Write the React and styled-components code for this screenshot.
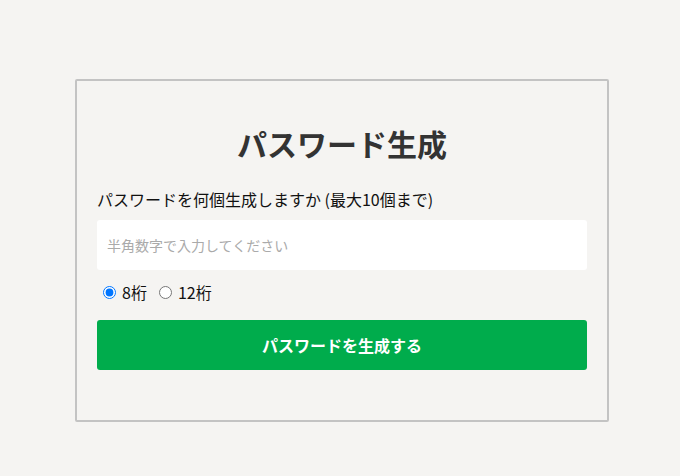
import React, { useState } from 'react';
import styled, { createGlobalStyle } from 'styled-components';

const GlobalStyle = createGlobalStyle`
  html, body {
    margin: 0;
    padding: 0;
    background: #f5f4f2;
    font-family: "Noto Sans CJK JP", "Noto Sans", sans-serif;
  }
`;

const Page = styled.div`
  padding: 79px 0 0 4px;
`;

const Card = styled.div`
  box-sizing: border-box;
  width: 534px;
  margin: 0 auto;
  padding: 38px 20px 50px;
  border: 2px solid #c3c3c3;
  border-radius: 2px;
  background: #f5f4f2;
`;

const Title = styled.h1`
  margin: 0;
  font-size: 30px;
  line-height: 48px;
  font-weight: 700;
  color: #333;
  text-align: center;
`;

const Label = styled.label`
  display: block;
  margin-top: 20px;
  font-size: 16px;
  line-height: 24px;
  color: #111;
`;

const Input = styled.input`
  display: block;
  box-sizing: border-box;
  width: 100%;
  height: 50px;
  margin-top: 9px;
  padding: 0 10px;
  border: none;
  border-radius: 3px;
  background: #fff;
  font-family: inherit;
  font-size: 14px;
  color: #333;
  outline: none;

  &::placeholder {
    color: #aaa;
  }
`;

const RadioRow = styled.div`
  display: flex;
  align-items: center;
  gap: 6px;
  margin-top: 11px;
  height: 22px;
`;

const RadioOption = styled.label`
  display: flex;
  align-items: center;
  font-size: 16px;
  color: #111;

  input {
    margin: 0 6px 0 6px;
    width: 13px;
    height: 13px;
  }
`;

const Button = styled.button`
  display: block;
  width: 100%;
  height: 50px;
  margin-top: 17px;
  border: none;
  border-radius: 3px;
  background: #00ac4c;
  color: #fff;
  font-family: inherit;
  font-size: 16px;
  font-weight: 700;
  cursor: pointer;
`;

export default function App() {
  const [digits, setDigits] = useState('8');
  return (
    <Page>
      <GlobalStyle />
      <Card>
        <Title>パスワード生成</Title>
        <Label htmlFor="count">パスワードを何個生成しますか (最大10個まで)</Label>
        <Input id="count" type="text" placeholder="半角数字で入力してください" />
        <RadioRow>
          <RadioOption>
            <input type="radio" name="digits" checked={digits === '8'} onChange={() => setDigits('8')} />
            8桁
          </RadioOption>
          <RadioOption>
            <input type="radio" name="digits" checked={digits === '12'} onChange={() => setDigits('12')} />
            12桁
          </RadioOption>
        </RadioRow>
        <Button>パスワードを生成する</Button>
      </Card>
    </Page>
  );
}
